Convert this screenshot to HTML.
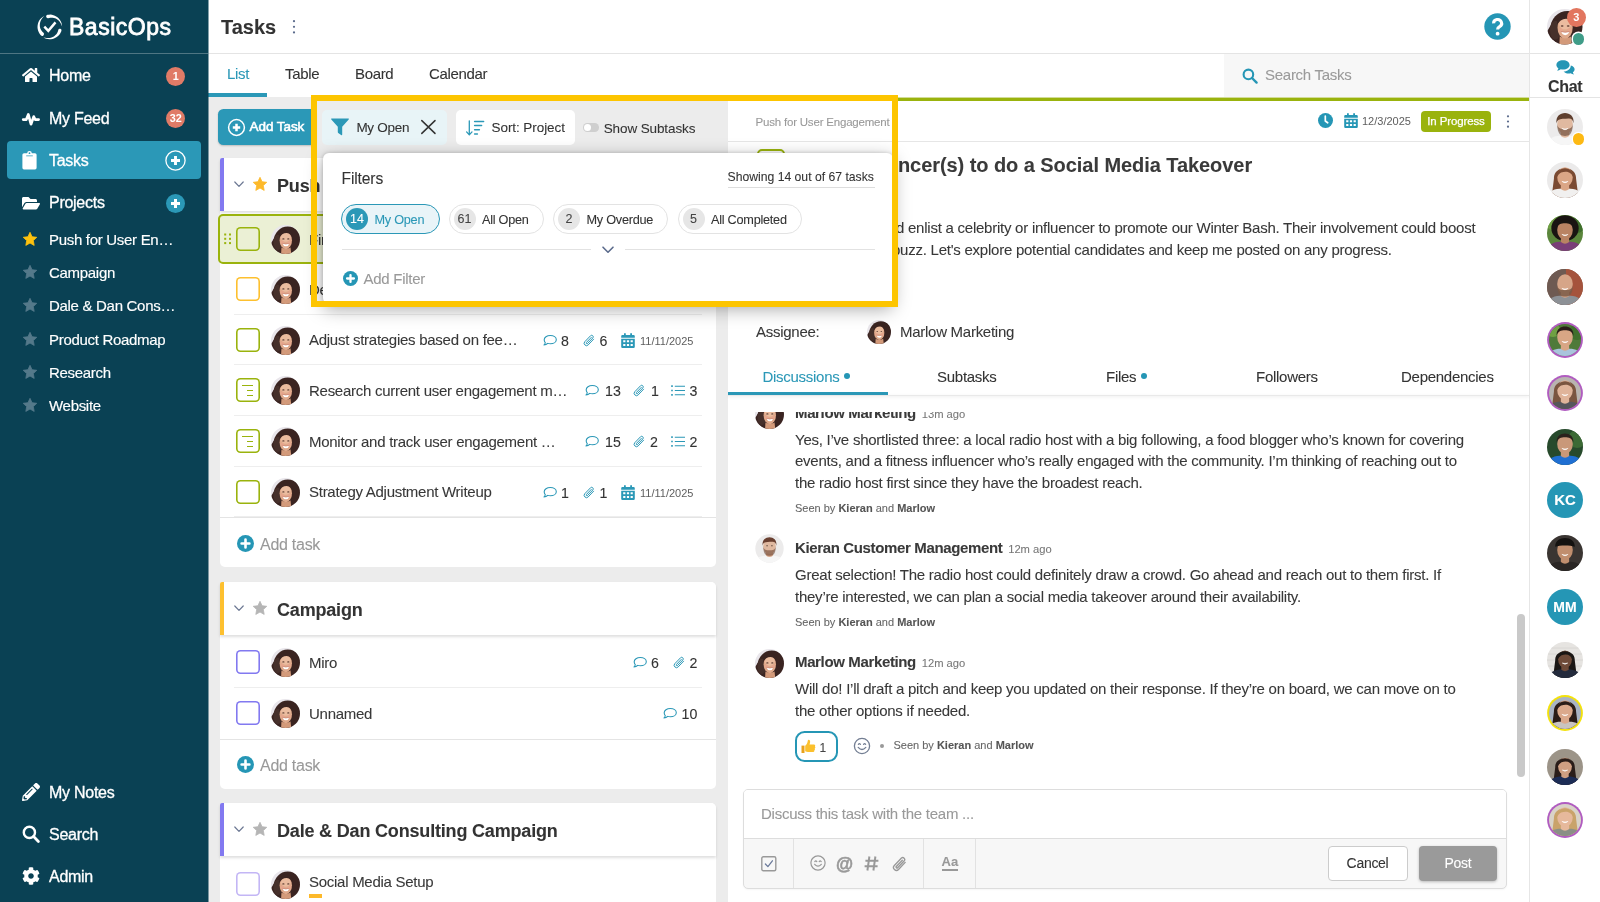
<!DOCTYPE html>
<html lang="en">
<head>
<meta charset="utf-8">
<title>BasicOps – Tasks</title>
<style>
*{box-sizing:border-box;margin:0;padding:0}
html,body{width:1600px;height:902px;overflow:hidden;background:#fff}
body{font-family:"Liberation Sans",Arial,Helvetica,sans-serif;font-size:15px;color:#383838;letter-spacing:-0.018em;position:relative;-webkit-text-stroke:0.080px currentColor}
.abs{position:absolute}
#side,#hdr,#tabs,#list,#det,#chat,#ov,.tab{will-change:transform}
svg{display:block;overflow:visible}
.t{position:absolute;white-space:nowrap;line-height:1}
/* ---------- sidebar ---------- */
#side{position:absolute;left:0;top:0;width:208px;height:902px;background:#0a4154;color:#fff}
#side .logo-line{position:absolute;left:0;top:53px;width:208px;height:1px;background:#4f7683}
.nav{position:absolute;left:49px;margin-top:1px;font-size:16px;line-height:20px;color:#fff;white-space:nowrap;-webkit-text-stroke:0.3px #fff}
.nav.sub{font-size:15px;-webkit-text-stroke:0.15px #fff;margin-top:0;letter-spacing:-0.020em}
.badge{position:absolute;left:166.300px;margin-top:0.800px;width:19px;height:19px;border-radius:50%;background:#e07b67;color:#fff;-webkit-text-stroke:0;font-weight:bold;font-size:10.800px;line-height:19px;text-align:center;letter-spacing:0}
/* ---------- header ---------- */
#hdr{position:absolute;left:208px;top:0;width:1322px;height:54px;background:#fff;border-bottom:1px solid #e4e4e4}
#tabs{position:absolute;left:208px;top:54px;width:1322px;height:43px;background:#fff}
.tab{position:absolute;top:65px;font-size:15px;line-height:17px;color:#333;white-space:nowrap;letter-spacing:-0.022em}
/* ---------- list ---------- */
#list{position:absolute;left:208px;top:97px;width:520px;height:805px;background:#ececec;overflow:hidden}
.card{position:absolute;left:12px;width:496px;background:#fff;border-radius:5px}
.ghead{position:absolute;left:0;top:0;width:496px;height:53px;border-radius:2px 5px 0 0;box-shadow:0 2px 3px rgba(0,0,0,.13);background:#fff}
.ghead .stripe{position:absolute;left:0;top:0;width:4px;height:53px;border-radius:2px 0 0 0}
.gtitle{position:absolute;left:57px;top:16.500px;font-size:18px;font-weight:bold;line-height:22px;color:#333;white-space:nowrap;letter-spacing:-0.01em}
.row{position:absolute;left:0;width:496px;height:50.5px}
.row .ln{position:absolute;left:14px;right:14px;bottom:0;height:1px;background:#eeeeee}
.cb{position:absolute;left:16px;top:13px;width:24.200px;height:24.200px;border-radius:4.500px;background:#fff}
.av{position:absolute;left:51px;top:11px;width:29px;height:29px}
.rt{position:absolute;left:89px;top:16.500px;font-size:15px;line-height:18px;white-space:nowrap;color:#383838}
.cnt{position:absolute;top:17px;font-size:14.200px;line-height:18px;color:#333;letter-spacing:0;-webkit-text-stroke:0.100px currentColor}
.dt{position:absolute;top:19px;font-size:11px;line-height:14px;color:#5e5e5e;letter-spacing:0;-webkit-text-stroke:0}
.addt{position:absolute;left:40px;margin-top:1.500px;font-size:16px;line-height:20px;color:#999}
/* ---------- detail ---------- */
#det{position:absolute;left:728px;top:97px;width:802px;height:805px;background:#fff;border-right:1px solid #e6e6e6}
.msg{position:absolute;left:67px;font-size:15px;line-height:21.6px;color:#383838;white-space:nowrap;letter-spacing:-0.0162em}
.nm{position:absolute;left:67px;font-size:15px;font-weight:bold;line-height:18px;color:#3a3a3a;white-space:nowrap;letter-spacing:-0.024em}
.nm span{font-weight:normal;font-size:11.2px;color:#777;letter-spacing:0;margin-left:2px}
.seen{position:absolute;left:67px;font-size:11px;line-height:13px;color:#666;white-space:nowrap;letter-spacing:0}
.seen b{color:#555}
/* ---------- chat col ---------- */
#chat{position:absolute;left:1530px;top:0;width:70px;height:902px;background:#fff}
.cav{position:absolute;left:17px;width:36px;height:36px;border-radius:50%;overflow:hidden}
</style>
</head>
<body>
<!--DEFS-S-->
<svg width="0" height="0" style="position:absolute">
<defs>
<clipPath id="c30"><circle cx="15" cy="15" r="15"/></clipPath>
<g id="marlow" clip-path="url(#c30)">
  <rect width="30" height="30" fill="#e9e6eb"/>
  <ellipse cx="17.300" cy="17" rx="14.600" ry="15.400" fill="#3a2421"/>
  <path d="M0 19 L3 14 L9 31 L0 31 Z" fill="#3a2421"/>
  <ellipse cx="7" cy="18" rx="4.500" ry="8" fill="#46302b"/>
  <path d="M10.800 23 C12 25 19 25 20.200 23 L21 30.500 H10.400 Z" fill="#d39a7a"/>
  <ellipse cx="15.300" cy="15.800" rx="6.400" ry="9.200" fill="#dfa98b"/>
  <ellipse cx="15.300" cy="12.800" rx="5" ry="4.600" fill="#edc0a4" opacity="0.800"/>
  <ellipse cx="11.700" cy="17.800" rx="1.800" ry="1.500" fill="#e8a58f" opacity="0.700"/>
  <ellipse cx="19" cy="17.800" rx="1.800" ry="1.500" fill="#e8a58f" opacity="0.700"/>
  <path d="M8.400 13.500 C8.600 7 12 4.600 16 4.700 C20.600 4.800 22.800 8.500 22.400 14 C21.400 10.800 19.500 8.400 16.500 8.200 C13 8 10.200 10 8.400 13.500 Z" fill="#3a2421"/>
  <path d="M12.100 19.300 Q15.400 20.300 18.700 19.300 Q17.900 22.100 15.400 22.100 Q12.900 22.100 12.100 19.300 Z" fill="#fff"/>
  <path d="M11.800 19 Q15.400 20.200 19 19" fill="none" stroke="#c4736a" stroke-width="0.500"/>
  <ellipse cx="12.800" cy="14.400" rx="1.200" ry="0.600" fill="#5a3a30"/>
  <ellipse cx="17.900" cy="14.400" rx="1.200" ry="0.600" fill="#5a3a30"/>
</g>
<clipPath id="c36"><circle cx="18" cy="18" r="17.600"/></clipPath>
<g id="kieran" clip-path="url(#c36)"><rect width="36" height="36" fill="#ecebeb"/><g transform="translate(18 17.700) scale(1.300) translate(-18 -18)"><path d="M2 37 C3 26 10 24.800 18 24.800 C26 24.800 33 26 34 37 Z" fill="#f6f6f6"/><path d="M14.800 20 h6.400 v5.200 q-3.200 2.500 -6.400 0 z" fill="#d8a98c"/><ellipse cx="18" cy="16" rx="6" ry="7.600" fill="#e0b9a0"/><path d="M12 16 C12 24 15 25.200 18 25.200 C21 25.200 24 24 24 16 C23.500 19.500 21 20 18 20 C15 20 12.500 19.500 12 16 Z" fill="#6a4532" opacity="0.600"/><path d="M11.500 15.500 C9.800 4.800 26.200 4.800 24.500 15.500 C24.200 12.800 23 11.600 20.800 11.700 C17.500 11.900 14.500 11.800 12.800 12.800 C12 13.500 11.700 14.400 11.500 15.500 Z" fill="#6a4030"/><ellipse cx="15.700" cy="15.600" rx="0.900" ry="0.500" fill="#5a4538"/><ellipse cx="20.300" cy="15.600" rx="0.900" ry="0.500" fill="#5a4538"/></g></g>
</defs></svg>
<!--DEFS-E-->
<!--SIDEBAR-S-->
<div id="side">
  <!-- logo -->
  <svg class="abs" style="left:36px;top:13px" width="28" height="28" viewBox="0 0 28 28"><path d="M11.45 1.83 L12.96 1.63 L14.47 1.62 L15.98 1.79 L17.45 2.16 L18.87 2.69 L20.21 3.40 L21.46 4.27 L22.58 5.29 L23.58 6.44 L24.42 7.70 L25.10 9.05 L25.62 10.48 L25.95 11.96 L26.09 13.47 L26.09 13.47 L25.53 12.03 L24.91 10.69 L24.17 9.45 L23.31 8.34 L22.36 7.37 L21.31 6.53 L20.21 5.85 L19.05 5.31 L17.86 4.93 L16.66 4.71 L15.47 4.64 L14.30 4.71 L13.18 4.92 L12.12 5.26 A1.75 1.75 0 0 1 11.45 1.83 Z" fill="#fff"/><path d="M25.43 17.90 L24.83 19.35 L24.05 20.70 L23.10 21.95 L22.01 23.06 L20.78 24.03 L19.44 24.83 L18.01 25.46 L16.51 25.90 L14.96 26.14 L13.40 26.19 L11.85 26.04 L10.32 25.70 L8.85 25.16 L7.47 24.44 L7.47 24.44 L9.01 24.80 L10.52 25.03 L12.00 25.09 L13.44 24.98 L14.83 24.70 L16.14 24.26 L17.36 23.68 L18.47 22.96 L19.46 22.12 L20.33 21.18 L21.05 20.17 L21.62 19.09 L22.04 17.97 L22.31 16.83 A1.65 1.65 0 0 1 25.43 17.90 Z" fill="#fff"/><path d="M4.80 22.29 L3.77 21.02 L2.91 19.62 L2.25 18.12 L1.79 16.55 L1.54 14.93 L1.52 13.29 L1.71 11.66 L2.11 10.07 L2.72 8.55 L3.53 7.12 L4.53 5.82 L5.68 4.66 L6.99 3.66 L8.41 2.84 L8.41 2.84 L7.23 4.03 L6.20 5.24 L5.34 6.53 L4.67 7.87 L4.19 9.26 L3.90 10.65 L3.80 12.05 L3.88 13.40 L4.13 14.71 L4.55 15.94 L5.11 17.07 L5.81 18.10 L6.61 19.00 L7.51 19.77 A1.85 1.85 0 0 1 4.80 22.29 Z" fill="#fff"/><path d="M8.300 13.600 L12.300 17.900 L19.500 9.400" fill="none" stroke="#fff" stroke-width="2.400" stroke-linecap="butt" stroke-linejoin="miter"/></svg>
  <div class="t" style="left:69px;top:15px;font-size:23px;line-height:25px;color:#fff;letter-spacing:0.022em;-webkit-text-stroke:0.8px #fff">BasicOps</div>
  <div class="logo-line"></div>

  <!-- Home -->
  <svg class="abs" style="left:22px;top:66.500px" width="18" height="16" viewBox="0 0 576 512"><path fill="#fff" d="M280.4 148.3 96 300.1V464a16 16 0 0 0 16 16l112.1-.3a16 16 0 0 0 15.900-16V368a16 16 0 0 1 16-16h64a16 16 0 0 1 16 16v95.600a16 16 0 0 0 16 16.100L464 480a16 16 0 0 0 16-16V300L295.700 148.300a12.200 12.200 0 0 0-15.300 0zM571.600 251.500 488 182.600V44.100a12 12 0 0 0-12-12h-56a12 12 0 0 0-12 12v72.600L318.500 43a48 48 0 0 0-61 0L4.300 251.500a12 12 0 0 0-1.600 16.900l25.500 31a12 12 0 0 0 16.900 1.600l235.200-193.700a12.200 12.200 0 0 1 15.300 0L530.900 301a12 12 0 0 0 16.900-1.600l25.500-31a12 12 0 0 0-1.700-16.900z"/></svg>
  <div class="nav" style="top:65px">Home</div>
  <div class="badge" style="top:66px">1</div>

  <!-- My Feed -->
  <svg class="abs" style="left:22px;top:109.500px" width="18" height="18" viewBox="0 0 18 18"><path d="M1.200 9.600 H4.300 L6.300 4.400 L9 14.200 L11.700 6.600 L13.200 9.600 H16.600" fill="none" stroke="#fff" stroke-width="2.700" stroke-linecap="round" stroke-linejoin="round"/></svg>
  <div class="nav" style="top:108px">My Feed</div>
  <div class="badge" style="top:108px">32</div>

  <!-- Tasks (active) -->
  <div class="abs" style="left:7px;top:141px;width:194px;height:38px;border-radius:4px;background:#2b98b7"></div>
  <svg class="abs" style="left:22px;top:151px" width="15" height="19" viewBox="0 0 15 19"><path fill="#fff" d="M5.200 2.200 A2.300 2.300 0 0 1 9.800 2.200 H13 A1.600 1.600 0 0 1 14.600 3.800 V16.800 A1.600 1.600 0 0 1 13 18.400 H2 A1.600 1.600 0 0 1 0.400 16.800 V3.800 A1.600 1.600 0 0 1 2 2.200 Z M7.500 1.300 A0.900 0.900 0 1 0 7.500 3.100 A0.900 0.900 0 1 0 7.500 1.300 Z M4.200 4.400 V5.200 H10.800 V4.400 Z"/></svg>
  <div class="nav" style="top:150px">Tasks</div>
  <svg class="abs" style="left:165px;top:150.400px" width="21" height="21" viewBox="0 0 21 21"><circle cx="10.500" cy="10.500" r="9.600" fill="none" stroke="#fff" stroke-width="1.300"/><path d="M10.500 6 V15 M6 10.500 H15" stroke="#fff" stroke-width="2.900" stroke-linecap="butt"/></svg>

  <!-- Projects -->
  <svg class="abs" style="left:22px;top:195.500px" width="18" height="14" viewBox="0 0 576 448"><path fill="#fff" d="M572.700 260.600 488.300 405.300A48 48 0 0 1 446.800 429H45.600c-18.500 0-30.100-20.100-20.700-36.100l84.400-144.700A48 48 0 0 1 150.800 224.400h401.200c18.500 0 30.100 20.100 20.700 36.200zM150.800 192.400H480v-48c0-26.500-21.500-48-48-48H272l-64-64H48C21.500 32.400 0 53.900 0 80.400v278l69.100-118.400c17.100-29.400 48.900-47.600 81.700-47.600z"/></svg>
  <div class="nav" style="top:192px">Projects</div>
  <svg class="abs" style="left:166px;top:193.700px" width="19" height="19" viewBox="0 0 19 19"><circle cx="9.500" cy="9.500" r="9.500" fill="#2b98b7"/><path d="M9.500 5 V14 M5 9.500 H14" stroke="#fff" stroke-width="3" stroke-linecap="butt"/></svg>

  <!-- project list -->
  <svg width="0" height="0" style="position:absolute"><defs><path id="star" d="M7 0.300 L9.050 4.700 L13.800 5.300 L10.300 8.600 L11.200 13.400 L7 11.050 L2.800 13.400 L3.700 8.600 L0.200 5.300 L4.950 4.700 Z" stroke-linejoin="round"/></defs></svg>
  <svg class="abs" style="left:23.300px;top:232.4px" width="14" height="14"><use href="#star" fill="#fec20e" stroke="#fec20e" stroke-width="0.800"/></svg>
  <div class="nav sub" style="top:230px">Push for User En…</div>
  <svg class="abs" style="left:23.300px;top:265.4px" width="14" height="14"><use href="#star" fill="#54798a" stroke="#54798a" stroke-width="0.800"/></svg>
  <div class="nav sub" style="top:263px">Campaign</div>
  <svg class="abs" style="left:23.300px;top:298.4px" width="14" height="14"><use href="#star" fill="#54798a" stroke="#54798a" stroke-width="0.800"/></svg>
  <div class="nav sub" style="top:296px">Dale &amp; Dan Cons…</div>
  <svg class="abs" style="left:23.300px;top:332.4px" width="14" height="14"><use href="#star" fill="#54798a" stroke="#54798a" stroke-width="0.800"/></svg>
  <div class="nav sub" style="top:330px">Product Roadmap</div>
  <svg class="abs" style="left:23.300px;top:365.4px" width="14" height="14"><use href="#star" fill="#54798a" stroke="#54798a" stroke-width="0.800"/></svg>
  <div class="nav sub" style="top:363px">Research</div>
  <svg class="abs" style="left:23.300px;top:398.4px" width="14" height="14"><use href="#star" fill="#54798a" stroke="#54798a" stroke-width="0.800"/></svg>
  <div class="nav sub" style="top:396px">Website</div>

  <!-- bottom -->
  <svg class="abs" style="left:22px;top:783px" width="18" height="18" viewBox="0 0 512 512"><path fill="#fff" d="M497.900 142.100l-46.100 46.100c-4.700 4.700-12.300 4.700-17 0l-111-111c-4.700-4.700-4.700-12.300 0-17l46.100-46.100c18.700-18.700 49.100-18.700 67.900 0l60.100 60.100c18.800 18.700 18.800 49.100 0 67.900zM284.200 99.800L21.600 362.400.4 483.900c-2.900 16.400 11.400 30.600 27.800 27.800l121.500-21.300 262.600-262.600c4.700-4.700 4.700-12.300 0-17l-111-111c-4.800-4.700-12.400-4.700-17.100 0zM124.100 339.900c-5.500-5.500-5.500-14.300 0-19.800l154-154c5.500-5.500 14.300-5.500 19.800 0s5.500 14.300 0 19.800l-154 154c-5.500 5.500-14.300 5.500-19.800 0zM88 424h48v36.300l-64.500 11.300-31.100-31.100L51.700 376H88v48z"/></svg>
  <div class="nav" style="top:782px">My Notes</div>
  <svg class="abs" style="left:22px;top:825px" width="18" height="18" viewBox="0 0 18 18"><circle cx="7.400" cy="7.400" r="5.600" fill="none" stroke="#fff" stroke-width="2.400"/><path d="M11.600 11.600 L16.400 16.400" stroke="#fff" stroke-width="2.800" stroke-linecap="round"/></svg>
  <div class="nav" style="top:824px">Search</div>
  <svg class="abs" style="left:22px;top:867px" width="18" height="18" viewBox="0 0 512 512"><path fill="#fff" d="M487.400 315.700l-42.600-24.600c4.300-23.200 4.300-47 0-70.200l42.600-24.600c4.900-2.800 7.100-8.600 5.500-14-11.100-35.600-30-67.800-54.700-94.600-3.800-4.100-10-5.100-14.800-2.300L380.800 110c-17.900-15.400-38.500-27.300-60.800-35.100V25.800c0-5.600-3.900-10.500-9.400-11.700-36.700-8.200-74.300-7.800-109.200 0-5.500 1.200-9.400 6.100-9.400 11.700V75c-22.200 7.900-42.800 19.800-60.800 35.100L88.700 85.500c-4.900-2.800-11-1.900-14.800 2.300-24.700 26.700-43.600 58.900-54.700 94.600-1.700 5.400.6 11.200 5.500 14L67.300 221c-4.300 23.200-4.300 47 0 70.200l-42.600 24.600c-4.900 2.800-7.100 8.600-5.500 14 11.100 35.600 30 67.800 54.700 94.600 3.800 4.100 10 5.100 14.800 2.300l42.600-24.600c17.900 15.400 38.500 27.300 60.800 35.100v49.200c0 5.600 3.900 10.500 9.400 11.700 36.700 8.200 74.300 7.800 109.200 0 5.500-1.200 9.400-6.100 9.400-11.700v-49.200c22.200-7.900 42.800-19.800 60.800-35.100l42.600 24.600c4.900 2.800 11 1.900 14.800-2.300 24.700-26.700 43.600-58.900 54.700-94.600 1.500-5.500-.7-11.300-5.600-14.100zM256 336c-44.100 0-80-35.900-80-80s35.900-80 80-80 80 35.900 80 80-35.900 80-80 80z"/></svg>
  <div class="nav" style="top:866px">Admin</div>
</div>
<!--SIDEBAR-E-->
<!--HEADER-S-->
<div id="hdr">
  <div class="t" style="left:13px;top:16px;font-size:20px;line-height:22px;font-weight:bold;color:#333;letter-spacing:0">Tasks</div>
  <svg class="abs" style="left:84px;top:19px" width="4" height="16" viewBox="0 0 4 16"><circle cx="2" cy="2.200" r="1.100" fill="#5b6b8c"/><circle cx="2" cy="7.800" r="1.100" fill="#5b6b8c"/><circle cx="2" cy="13.400" r="1.100" fill="#5b6b8c"/></svg>
  <svg class="abs" style="left:1276px;top:13px" width="27" height="27" viewBox="0 0 27 27"><circle cx="13.500" cy="13.500" r="13.200" fill="#2596b5"/><path d="M9.600 10.400 A4 3.800 0 1 1 15.600 13.600 Q13.600 14.700 13.600 16.600" fill="none" stroke="#fff" stroke-width="3.100" stroke-linecap="butt"/><circle cx="13.600" cy="20.700" r="1.900" fill="#fff"/></svg>
</div>
<div id="tabs">
  <div class="abs" style="left:0;top:39px;width:58.500px;height:4px;background:#2b98b7"></div>
  <div class="abs" style="left:1016px;top:0;width:306px;height:43px;background:#f7f7f7"></div>
  <svg class="abs" style="left:1034px;top:14px" width="16" height="16" viewBox="0 0 16 16"><circle cx="6.400" cy="6.400" r="4.800" fill="none" stroke="#2596b5" stroke-width="2.100"/><path d="M10 10 L14.600 14.600" stroke="#2596b5" stroke-width="2.400" stroke-linecap="round"/></svg>
  <div class="t" style="left:1057px;top:12px;font-size:15px;line-height:18px;color:#9a9a9a">Search Tasks</div>
</div>
<div class="tab" style="left:226.500px;color:#2b98b7">List</div>
<div class="tab" style="left:285px">Table</div>
<div class="tab" style="left:355px">Board</div>
<div class="tab" style="left:429px">Calendar</div>
<!--HEADER-E-->
<!--LIST-S-->
<div id="list"><div class="abs" style="left:10px;top:12px;width:98px;height:35.800px;border-radius:5.500px;background:#2b98b7;box-shadow:0 1px 2px rgba(0,0,0,.2)"></div><svg class="abs" style="left:20px;top:21.500px" width="17" height="17" viewBox="0 0 17 17"><circle cx="8.500" cy="8.500" r="7.900" fill="none" stroke="#fff" stroke-width="1.500"/><path d="M8.500 4.800 V12.200 M4.800 8.500 H12.200" stroke="#fff" stroke-width="2.500" stroke-linecap="butt"/></svg><div class="t" style="left:41.500px;top:21px;font-size:13.500px;line-height:18px;color:#fff;-webkit-text-stroke:0.550px #fff;letter-spacing:-0.005em">Add Task</div><div class="card" style="top:61px;height:409px"><div class="ghead"><div class="stripe" style="background:#8279f0"></div><svg class="abs" style="left:14px;top:23px" width="10" height="7" viewBox="0 0 10 7"><path d="M0.800 1 L5 5.400 L9.200 1" fill="none" stroke="#6c7893" stroke-width="1.200" stroke-linecap="round" stroke-linejoin="round"/></svg><svg class="abs" style="left:33px;top:19px" width="14" height="14"><use href="#star" fill="#fdb92a" stroke="#fdb92a" stroke-width="0.800"/></svg><div class="gtitle">Push for User Engagement</div></div><div class="abs" style="left:-2px;top:56px;width:500px;height:50px;border:2px solid #9ab30d;border-radius:5px;background:#ebf0d5"></div><svg class="abs" style="left:4px;top:75px" width="8" height="12" viewBox="0 0 8 12"><g fill="#9ab30d"><rect x="0.200" y="0.500" width="2" height="2"/><rect x="5" y="0.500" width="2" height="2"/><rect x="0.200" y="4.800" width="2" height="2"/><rect x="5" y="4.800" width="2" height="2"/><rect x="0.200" y="9.100" width="2" height="2"/><rect x="5" y="9.100" width="2" height="2"/></g></svg><div class="row" style="top:56px"><div class="cb" style="box-shadow:inset 0 0 0 1.600px #9ab30d;background:#ebf0d5;left:16px;top:13px"></div><svg class="av" viewBox="0 0 30 30"><use href="#marlow"/></svg><div class="rt">Find Influencer(s) to do a Social…</div></div><div class="row" style="top:106px"><div class="cb" style="box-shadow:inset 0 0 0 1.600px #fdc02f;background:#fff;left:16px;top:13px"></div><svg class="av" viewBox="0 0 30 30"><use href="#marlow"/></svg><div class="rt">Decide on the campaign channels</div><div class="ln"></div></div><div class="row" style="top:156.5px"><div class="cb" style="box-shadow:inset 0 0 0 1.600px #9ab30d;background:#fff;left:16px;top:13px"></div><svg class="av" viewBox="0 0 30 30"><use href="#marlow"/></svg><div class="rt">Adjust strategies based on fee…</div><svg class="abs" style="left:323px;top:19px" width="14" height="11.200" viewBox="0 0 14 12" preserveAspectRatio="none" transform="translate(0 0.800)"><path d="M7.300 0.800 C10.700 0.800 13.300 2.700 13.300 5.200 C13.300 7.700 10.700 9.600 7.300 9.600 C6.400 9.600 5.500 9.450 4.700 9.200 C3.800 10.200 2.400 10.900 0.900 11 C1.700 10.200 2.200 9.300 2.300 8.300 C1.600 7.500 1.200 6.400 1.200 5.200 C1.200 2.700 3.900 0.800 7.300 0.800 Z" fill="none" stroke="#2b98b7" stroke-width="1.100" stroke-linejoin="round"/></svg><div class="cnt" style="left:341px;top:17px">8</div><svg class="abs" style="left:363px;top:19px" width="12" height="13" viewBox="0 0 12 13"><path d="M10.600 5.200 L5.200 10.900 A2.300 2.300 0 0 1 1.800 7.700 L7.600 1.700 A1.600 1.600 0 0 1 9.900 3.900 L4.500 9.500 A0.700 0.700 0 0 1 3.400 8.500 L8.300 3.400" fill="none" stroke="#2b98b7" stroke-width="1" stroke-linecap="round" stroke-linejoin="round"/></svg><div class="cnt" style="left:379.5px;top:17px">6</div><svg class="abs" style="left:400.800px;top:18px" width="14" height="15" viewBox="0 0 14 15"><path fill="#2b98b7" d="M3 0.300 h1.800 v1.700 h4.400 v-1.700 h1.800 v1.700 h1.600 a1.200 1.200 0 0 1 1.200 1.200 v1.600 h-13.600 v-1.600 a1.200 1.200 0 0 1 1.200 -1.200 h1.600 z M0.200 5.700 h13.600 v8 a1.200 1.200 0 0 1 -1.200 1.200 h-11.200 a1.200 1.200 0 0 1 -1.200 -1.200 z M2.200 7.300 v2 h2.200 v-2 z M5.900 7.300 v2 h2.200 v-2 z M9.600 7.300 v2 h2.200 v-2 z M2.200 10.900 v2 h2.200 v-2 z M5.900 10.900 v2 h2.200 v-2 z M9.600 10.900 v2 h2.200 v-2 z"/></svg><div class="dt" style="left:420px;top:19px">11/11/2025</div><div class="ln"></div></div><div class="row" style="top:207px;height:51px"><div class="cb" style="box-shadow:inset 0 0 0 1.600px #9ab30d;background:#fff;left:16px;top:13px"><i style="position:absolute;left:6.400px;top:6.700px;width:11px;height:1.300px;background:#9ab30d"></i><i style="position:absolute;left:10.500px;top:11.700px;width:6.900px;height:1.300px;background:#9ab30d"></i><i style="position:absolute;left:10.500px;top:16.700px;width:6.900px;height:1.300px;background:#9ab30d"></i></div><svg class="av" viewBox="0 0 30 30"><use href="#marlow"/></svg><div class="rt">Research current user engagement m…</div><svg class="abs" style="left:365px;top:19px" width="14" height="11.200" viewBox="0 0 14 12" preserveAspectRatio="none" transform="translate(0 0.800)"><path d="M7.300 0.800 C10.700 0.800 13.300 2.700 13.300 5.200 C13.300 7.700 10.700 9.600 7.300 9.600 C6.400 9.600 5.500 9.450 4.700 9.200 C3.800 10.200 2.400 10.900 0.900 11 C1.700 10.200 2.200 9.300 2.300 8.300 C1.600 7.500 1.200 6.400 1.200 5.200 C1.200 2.700 3.900 0.800 7.300 0.800 Z" fill="none" stroke="#2b98b7" stroke-width="1.100" stroke-linejoin="round"/></svg><div class="cnt" style="left:385px;top:17px">13</div><svg class="abs" style="left:413px;top:19px" width="12" height="13" viewBox="0 0 12 13"><path d="M10.600 5.200 L5.200 10.900 A2.300 2.300 0 0 1 1.800 7.700 L7.600 1.700 A1.600 1.600 0 0 1 9.900 3.900 L4.500 9.500 A0.700 0.700 0 0 1 3.400 8.500 L8.300 3.400" fill="none" stroke="#2b98b7" stroke-width="1" stroke-linecap="round" stroke-linejoin="round"/></svg><div class="cnt" style="left:431px;top:17px">1</div><svg class="abs" style="left:451px;top:20px" width="14" height="11" viewBox="0 0 14 11"><path d="M0.200 1.200 H1.800 M0.200 5.500 H1.800 M0.200 9.800 H1.800" stroke="#2b98b7" stroke-width="1.700"/><path d="M3.800 1.200 H14 M3.800 5.500 H14 M3.800 9.800 H14" stroke="#2b98b7" stroke-width="1.100"/></svg><div class="cnt" style="left:469.5px;top:17px">3</div><div class="ln"></div></div><div class="row" style="top:258px"><div class="cb" style="box-shadow:inset 0 0 0 1.600px #9ab30d;background:#fff;left:16px;top:13px"><i style="position:absolute;left:6.400px;top:6.700px;width:11px;height:1.300px;background:#9ab30d"></i><i style="position:absolute;left:10.500px;top:11.700px;width:6.900px;height:1.300px;background:#9ab30d"></i><i style="position:absolute;left:10.500px;top:16.700px;width:6.900px;height:1.300px;background:#9ab30d"></i></div><svg class="av" viewBox="0 0 30 30"><use href="#marlow"/></svg><div class="rt">Monitor and track user engagement …</div><svg class="abs" style="left:365px;top:19px" width="14" height="11.200" viewBox="0 0 14 12" preserveAspectRatio="none" transform="translate(0 0.800)"><path d="M7.300 0.800 C10.700 0.800 13.300 2.700 13.300 5.200 C13.300 7.700 10.700 9.600 7.300 9.600 C6.400 9.600 5.500 9.450 4.700 9.200 C3.800 10.200 2.400 10.900 0.900 11 C1.700 10.200 2.200 9.300 2.300 8.300 C1.600 7.500 1.200 6.400 1.200 5.200 C1.200 2.700 3.900 0.800 7.300 0.800 Z" fill="none" stroke="#2b98b7" stroke-width="1.100" stroke-linejoin="round"/></svg><div class="cnt" style="left:385px;top:17px">15</div><svg class="abs" style="left:413px;top:19px" width="12" height="13" viewBox="0 0 12 13"><path d="M10.600 5.200 L5.200 10.900 A2.300 2.300 0 0 1 1.800 7.700 L7.600 1.700 A1.600 1.600 0 0 1 9.900 3.900 L4.500 9.500 A0.700 0.700 0 0 1 3.400 8.500 L8.300 3.400" fill="none" stroke="#2b98b7" stroke-width="1" stroke-linecap="round" stroke-linejoin="round"/></svg><div class="cnt" style="left:430px;top:17px">2</div><svg class="abs" style="left:451px;top:20px" width="14" height="11" viewBox="0 0 14 11"><path d="M0.200 1.200 H1.800 M0.200 5.500 H1.800 M0.200 9.800 H1.800" stroke="#2b98b7" stroke-width="1.700"/><path d="M3.800 1.200 H14 M3.800 5.500 H14 M3.800 9.800 H14" stroke="#2b98b7" stroke-width="1.100"/></svg><div class="cnt" style="left:469.5px;top:17px">2</div><div class="ln"></div></div><div class="row" style="top:308.5px"><div class="cb" style="box-shadow:inset 0 0 0 1.600px #9ab30d;background:#fff;left:16px;top:13px"></div><svg class="av" viewBox="0 0 30 30"><use href="#marlow"/></svg><div class="rt">Strategy Adjustment Writeup</div><svg class="abs" style="left:323px;top:19px" width="14" height="11.200" viewBox="0 0 14 12" preserveAspectRatio="none" transform="translate(0 0.800)"><path d="M7.300 0.800 C10.700 0.800 13.300 2.700 13.300 5.200 C13.300 7.700 10.700 9.600 7.300 9.600 C6.400 9.600 5.500 9.450 4.700 9.200 C3.800 10.200 2.400 10.900 0.900 11 C1.700 10.200 2.200 9.300 2.300 8.300 C1.600 7.500 1.200 6.400 1.200 5.200 C1.200 2.700 3.900 0.800 7.300 0.800 Z" fill="none" stroke="#2b98b7" stroke-width="1.100" stroke-linejoin="round"/></svg><div class="cnt" style="left:341px;top:17px">1</div><svg class="abs" style="left:363px;top:19px" width="12" height="13" viewBox="0 0 12 13"><path d="M10.600 5.200 L5.200 10.900 A2.300 2.300 0 0 1 1.800 7.700 L7.600 1.700 A1.600 1.600 0 0 1 9.900 3.900 L4.500 9.500 A0.700 0.700 0 0 1 3.400 8.500 L8.300 3.400" fill="none" stroke="#2b98b7" stroke-width="1" stroke-linecap="round" stroke-linejoin="round"/></svg><div class="cnt" style="left:379.5px;top:17px">1</div><svg class="abs" style="left:400.800px;top:18px" width="14" height="15" viewBox="0 0 14 15"><path fill="#2b98b7" d="M3 0.300 h1.800 v1.700 h4.400 v-1.700 h1.800 v1.700 h1.600 a1.200 1.200 0 0 1 1.200 1.200 v1.600 h-13.600 v-1.600 a1.200 1.200 0 0 1 1.200 -1.200 h1.600 z M0.200 5.700 h13.600 v8 a1.200 1.200 0 0 1 -1.200 1.200 h-11.200 a1.200 1.200 0 0 1 -1.200 -1.200 z M2.200 7.300 v2 h2.200 v-2 z M5.900 7.300 v2 h2.200 v-2 z M9.600 7.300 v2 h2.200 v-2 z M2.200 10.900 v2 h2.200 v-2 z M5.900 10.900 v2 h2.200 v-2 z M9.600 10.900 v2 h2.200 v-2 z"/></svg><div class="dt" style="left:420px;top:19px">11/11/2025</div><div class="ln"></div></div><div class="abs" style="left:0;top:358.500px;width:496px;height:1px;background:#e4e4e4"></div><svg class="abs" style="left:17px;top:377px" width="17" height="17" viewBox="0 0 17 17"><circle cx="8.500" cy="8.500" r="8.500" fill="#2596b5"/><path d="M8.500 4.600 V12.400 M4.600 8.500 H12.400" stroke="#fff" stroke-width="2.600" stroke-linecap="round"/></svg><div class="addt" style="top:375px">Add task</div></div><div class="card" style="top:485px;height:207px"><div class="ghead"><div class="stripe" style="background:#fdc02f"></div><svg class="abs" style="left:14px;top:23px" width="10" height="7" viewBox="0 0 10 7"><path d="M0.800 1 L5 5.400 L9.200 1" fill="none" stroke="#6c7893" stroke-width="1.200" stroke-linecap="round" stroke-linejoin="round"/></svg><svg class="abs" style="left:33px;top:19px" width="14" height="14"><use href="#star" fill="#b5b5b5" stroke="#b5b5b5" stroke-width="0.800"/></svg><div class="gtitle">Campaign</div></div><div class="row" style="top:55px"><div class="cb" style="box-shadow:inset 0 0 0 1.600px #8279f0;background:#fff;left:16px;top:13px"></div><svg class="av" viewBox="0 0 30 30"><use href="#marlow"/></svg><div class="rt">Miro</div><svg class="abs" style="left:413px;top:19px" width="14" height="11.200" viewBox="0 0 14 12" preserveAspectRatio="none" transform="translate(0 0.800)"><path d="M7.300 0.800 C10.700 0.800 13.300 2.700 13.300 5.200 C13.300 7.700 10.700 9.600 7.300 9.600 C6.400 9.600 5.500 9.450 4.700 9.200 C3.800 10.200 2.400 10.900 0.900 11 C1.700 10.200 2.200 9.300 2.300 8.300 C1.600 7.500 1.200 6.400 1.200 5.200 C1.200 2.700 3.900 0.800 7.300 0.800 Z" fill="none" stroke="#2b98b7" stroke-width="1.100" stroke-linejoin="round"/></svg><div class="cnt" style="left:431px;top:17px">6</div><svg class="abs" style="left:453px;top:19px" width="12" height="13" viewBox="0 0 12 13"><path d="M10.600 5.200 L5.200 10.900 A2.300 2.300 0 0 1 1.800 7.700 L7.600 1.700 A1.600 1.600 0 0 1 9.900 3.900 L4.500 9.500 A0.700 0.700 0 0 1 3.400 8.500 L8.300 3.400" fill="none" stroke="#2b98b7" stroke-width="1" stroke-linecap="round" stroke-linejoin="round"/></svg><div class="cnt" style="left:469.5px;top:17px">2</div><div class="ln"></div></div><div class="row" style="top:106px"><div class="cb" style="box-shadow:inset 0 0 0 1.600px #8279f0;background:#fff;left:16px;top:13px"></div><svg class="av" viewBox="0 0 30 30"><use href="#marlow"/></svg><div class="rt">Unnamed</div><svg class="abs" style="left:443px;top:19px" width="14" height="11.200" viewBox="0 0 14 12" preserveAspectRatio="none" transform="translate(0 0.800)"><path d="M7.300 0.800 C10.700 0.800 13.300 2.700 13.300 5.200 C13.300 7.700 10.700 9.600 7.300 9.600 C6.400 9.600 5.500 9.450 4.700 9.200 C3.800 10.200 2.400 10.900 0.900 11 C1.700 10.200 2.200 9.300 2.300 8.300 C1.600 7.500 1.200 6.400 1.200 5.200 C1.200 2.700 3.900 0.800 7.300 0.800 Z" fill="none" stroke="#2b98b7" stroke-width="1.100" stroke-linejoin="round"/></svg><div class="cnt" style="left:461.5px;top:17px">10</div></div><div class="abs" style="left:0;top:156.500px;width:496px;height:1px;background:#e4e4e4"></div><svg class="abs" style="left:17px;top:174px" width="17" height="17" viewBox="0 0 17 17"><circle cx="8.500" cy="8.500" r="8.500" fill="#2596b5"/><path d="M8.500 4.600 V12.400 M4.600 8.500 H12.400" stroke="#fff" stroke-width="2.600" stroke-linecap="round"/></svg><div class="addt" style="top:172px">Add task</div></div><div class="card" style="top:706px;height:140px"><div class="ghead"><div class="stripe" style="background:#8279f0"></div><svg class="abs" style="left:14px;top:23px" width="10" height="7" viewBox="0 0 10 7"><path d="M0.800 1 L5 5.400 L9.200 1" fill="none" stroke="#6c7893" stroke-width="1.200" stroke-linecap="round" stroke-linejoin="round"/></svg><svg class="abs" style="left:33px;top:19px" width="14" height="14"><use href="#star" fill="#b5b5b5" stroke="#b5b5b5" stroke-width="0.800"/></svg><div class="gtitle">Dale &amp; Dan Consulting Campaign</div></div><div class="row" style="top:56px"><div class="cb" style="box-shadow:inset 0 0 0 1.600px #c3b6f5;background:#fff;left:16px;top:13px"></div><svg class="av" viewBox="0 0 30 30"><use href="#marlow"/></svg><div class="rt" style="top:14px">Social Media Setup</div><div class="abs" style="left:89px;top:35px;width:13px;height:4px;background:#fdb92a"></div></div></div></div>
<!--LIST-E-->
<!--DETAIL-S-->
<div id="det"><div class="abs" style="left:0;top:0;width:801px;height:1px;background:#d2dc99"></div><div class="abs" style="left:0;top:1px;width:801px;height:3px;background:#9ab30d"></div><div class="t" style="left:27.5px;top:18px;font-size:11.500px;line-height:14px;color:#999;letter-spacing:-0.017em">Push for User Engagement</div><svg class="abs" style="left:589.5px;top:16.3px" width="15" height="15" viewBox="0 0 15 15"><circle cx="7.500" cy="7.500" r="7.500" fill="#2596b5"/><path d="M7.300 3.200 V8 L9.700 9.800" fill="none" stroke="#fff" stroke-width="1.700" stroke-linecap="round" stroke-linejoin="round"/></svg><svg class="abs" style="left:616px;top:16.3px" width="14" height="15" viewBox="0 0 14 15"><path fill="#2596b5" d="M3 0.300 h1.800 v1.700 h4.400 v-1.700 h1.800 v1.700 h1.600 a1.200 1.200 0 0 1 1.200 1.200 v1.600 h-13.600 v-1.600 a1.200 1.200 0 0 1 1.200 -1.200 h1.600 z M0.200 5.700 h13.600 v8 a1.200 1.200 0 0 1 -1.200 1.200 h-11.200 a1.200 1.200 0 0 1 -1.200 -1.200 z M2.200 7.300 v2 h2.200 v-2 z M5.900 7.300 v2 h2.200 v-2 z M9.600 7.300 v2 h2.200 v-2 z M2.200 10.900 v2 h2.200 v-2 z M5.900 10.900 v2 h2.200 v-2 z M9.600 10.900 v2 h2.200 v-2 z"/></svg><div class="t" style="left:634px;top:17px;font-size:11px;line-height:14px;color:#5e5e5e;letter-spacing:0;-webkit-text-stroke:0">12/3/2025</div><div class="abs" style="left:693px;top:13.5px;width:70px;height:21px;border-radius:4px;background:#9ab30d;color:#fff;font-size:11.500px;line-height:21px;text-align:center;letter-spacing:-0.010em;-webkit-text-stroke:0.250px #fff">In Progress</div><svg class="abs" style="left:777.5px;top:17px" width="4" height="16" viewBox="0 0 4 16"><circle cx="2" cy="2.300" r="1.100" fill="#5b6b8c"/><circle cx="2" cy="7.500" r="1.100" fill="#5b6b8c"/><circle cx="2" cy="12.700" r="1.100" fill="#5b6b8c"/></svg><div class="abs" style="left:0;top:44px;width:801px;height:1px;background:#e6e6e6"></div><div class="abs" style="left:29px;top:52px;width:28px;height:28px;border-radius:5px;border:2px solid #9ab30d;background:#fff"></div><div class="t" style="left:69.5px;top:56.400px;font-size:20px;line-height:24px;font-weight:bold;color:#3a3a3a;letter-spacing:-0.003em">Find Influencer(s) to do a Social Media Takeover</div><div class="msg" style="left:28px;top:120px"><span style="display:inline-block;width:140px;overflow:hidden;vertical-align:top">I think that we shoul</span>d enlist a celebrity or influencer to promote our Winter Bash. Their involvement could boost<br><span style="display:inline-block;width:136px;overflow:hidden;vertical-align:top">turnout and generate&nbsp;</span>buzz. Let's explore potential candidates and keep me posted on any progress.</div><div class="t" style="left:28px;top:225.5px;font-size:15px;line-height:18px">Assignee:</div><svg class="abs" style="left:139px;top:222.5px" width="24" height="24" viewBox="0 0 30 30"><use href="#marlow"/></svg><div class="t" style="left:172px;top:225.5px;font-size:15px;line-height:18px">Marlow Marketing</div><div class="t" style="left:34.4px;top:270.5px;font-size:15px;line-height:18px;color:#2b98b7">Discussions<i style="display:inline-block;width:6px;height:6px;border-radius:50%;background:#2596b5;margin-left:5px;vertical-align:2.500px"></i></div><div class="t" style="left:209px;top:270.5px;font-size:15px;line-height:18px;color:#333">Subtasks</div><div class="t" style="left:378px;top:270.5px;font-size:15px;line-height:18px;color:#333">Files<i style="display:inline-block;width:6px;height:6px;border-radius:50%;background:#2596b5;margin-left:5px;vertical-align:2.500px"></i></div><div class="t" style="left:528px;top:270.5px;font-size:15px;line-height:18px;color:#333">Followers</div><div class="t" style="left:673px;top:270.5px;font-size:15px;line-height:18px;color:#333">Dependencies</div><div class="abs" style="left:0;top:297.5px;width:801px;height:1px;background:#e9e9e9;box-shadow:0 1px 3px rgba(0,0,0,.12)"></div><div class="abs" style="left:0;top:294.5px;width:160px;height:3.500px;background:#2b98b7"></div><div class="abs" style="left:0;top:313.5px;width:785px;height:374.5px;overflow:hidden"><svg class="abs" style="left:26.5px;top:-11.0px" width="29" height="29" viewBox="0 0 30 30"><use href="#marlow"/></svg><div class="nm" style="top:-7.0px">Marlow Marketing <span>13m ago</span></div><div class="msg" style="top:18.3px">Yes, I’ve shortlisted three: a local radio host with a big following, a food blogger who’s known for covering<br>events, and a fitness influencer who’s really engaged with the community. I’m thinking of reaching out to<br>the radio host first since they have the broadest reach.</div><div class="seen" style="top:91.5px">Seen by <b>Kieran</b> and <b>Marlow</b></div><svg class="abs" style="left:26.5px;top:123.5px" width="29" height="29" viewBox="0 0 36 36"><use href="#kieran"/></svg><div class="nm" style="top:128.5px">Kieran Customer Management <span>12m ago</span></div><div class="msg" style="top:153.8px">Great selection! The radio host could definitely draw a crowd. Go ahead and reach out to them first. If<br>they’re interested, we can plan a social media takeover around their availability.</div><div class="seen" style="top:205.5px">Seen by <b>Kieran</b> and <b>Marlow</b></div><svg class="abs" style="left:26.5px;top:238.0px" width="29" height="29" viewBox="0 0 30 30"><use href="#marlow"/></svg><div class="nm" style="top:242.5px">Marlow Marketing <span>12m ago</span></div><div class="msg" style="top:267.8px">Will do! I’ll draft a pitch and keep you updated on their response. If they’re on board, we can move on to<br>the other options if needed.</div><div class="abs" style="left:67px;top:320.3px;width:42.500px;height:31.500px;border:2px solid #2596b5;border-radius:9.500px;background:#fff"></div><svg class="abs" style="left:73px;top:328.5px" width="15" height="15" viewBox="0 0 15 15"><path d="M0.500 6.600 h3 v7.400 h-3 z" fill="#e8a21c"/><path d="M4.200 6.800 C5.800 5.600 6.600 3.600 6.800 1.400 C6.900 0.600 8.600 0.500 9 1.800 C9.300 3 9 4.400 8.500 5.600 h4.500 c1.200 0 1.600 1.400 0.900 2 c0.700 0.500 0.600 1.600 -0.200 1.900 c0.500 0.600 0.300 1.500 -0.400 1.800 c0.400 0.700 0 1.700 -1 1.700 h-5.300 c-1 0 -1.900 -0.300 -2.800 -0.800 z" fill="#fbc02d"/></svg><div class="t" style="left:91.5px;top:330.0px;font-size:12px;line-height:14px;color:#444;letter-spacing:0">1</div><svg class="abs" style="left:125px;top:326.5px" width="18" height="18" viewBox="0 0 18 18"><circle cx="9" cy="9" r="7.600" fill="none" stroke="#737e93" stroke-width="1.300"/><path d="M5.200 10.400 Q9 14.600 12.800 10.400" fill="none" stroke="#737e93" stroke-width="1.300" stroke-linecap="round"/><path d="M5.400 7.300 q1 -1.300 2 0 M10.600 7.300 q1 -1.300 2 0" fill="none" stroke="#737e93" stroke-width="1.300" stroke-linecap="round"/></svg><div class="abs" style="left:152px;top:333.0px;width:4px;height:4px;border-radius:50%;background:#999"></div><div class="seen" style="left:165.5px;top:328.5px">Seen by <b>Kieran</b> and <b>Marlow</b></div></div><div class="abs" style="left:0;top:303px;width:790px;height:12px;background:#fff"></div><div class="abs" style="left:788.500px;top:516.700px;width:8px;height:163.500px;border-radius:4px;background:#c9c9c9"></div><div class="abs" style="left:15px;top:692px;width:764px;height:99.500px;border:1px solid #ddd;border-radius:5px;background:#f7f7f7;box-shadow:0 1px 2px rgba(0,0,0,.04);overflow:hidden"><div class="abs" style="left:0;top:0;width:764px;height:48.500px;background:#fff;border-bottom:1px solid #ddd"></div><div class="t" style="left:17px;top:15px;font-size:15px;line-height:18px;color:#999;letter-spacing:-0.017em">Discuss this task with the team ...</div><div class="abs" style="left:48.700px;top:49px;width:1px;height:50px;background:#e2e2e2"></div><div class="abs" style="left:178.700px;top:49px;width:1px;height:50px;background:#e2e2e2"></div><div class="abs" style="left:230.700px;top:49px;width:1px;height:50px;background:#e2e2e2"></div><svg class="abs" style="left:16.5px;top:66px" width="16" height="16" viewBox="0 0 16 16"><rect x="0.800" y="0.800" width="14" height="14" rx="1.500" fill="none" stroke="#999" stroke-width="1.400"/><path d="M4.400 8 L6.900 10.600 L11.400 4.800" fill="none" stroke="#6d7c9c" stroke-width="1.300" stroke-linecap="round" stroke-linejoin="round"/></svg><svg class="abs" style="left:66.4px;top:65.4px" width="16" height="16" viewBox="0 0 16 16"><circle cx="8" cy="8" r="7.100" fill="none" stroke="#999" stroke-width="1.200"/><path d="M4.700 9.300 Q8 13 11.300 9.300" fill="none" stroke="#999" stroke-width="1.200" stroke-linecap="round"/><path d="M4.800 6.600 q1 -1.300 2 0 M9.200 6.600 q1 -1.300 2 0" fill="none" stroke="#999" stroke-width="1.200" stroke-linecap="round"/></svg><div class="t" style="left:92.5px;top:62px;font-size:17.500px;line-height:20px;font-weight:bold;color:#999;letter-spacing:0;margin-top:1.500px;margin-left:-0.500px;-webkit-text-stroke:0.600px #999">@</div><svg class="abs" style="left:120px;top:66px" width="15" height="15" viewBox="0 0 15 15"><path d="M5.400 0.500 L3.400 14.500 M11.400 0.500 L9.400 14.500 M1.400 4.800 H14.400 M0.600 10.200 H13.600" fill="none" stroke="#999" stroke-width="2"/></svg><svg class="abs" style="left:147.5px;top:65.5px" width="15" height="16" viewBox="0 0 12 13"><path d="M10.600 5.200 L5.200 10.900 A2.300 2.300 0 0 1 1.800 7.700 L7.600 1.700 A1.600 1.600 0 0 1 9.900 3.900 L4.500 9.500 A0.700 0.700 0 0 1 3.400 8.500 L8.300 3.400" fill="none" stroke="#999" stroke-width="1.100" stroke-linecap="round" stroke-linejoin="round"/></svg><div class="t" style="left:197.5px;top:64px;font-size:13px;line-height:15px;font-weight:bold;color:#999;letter-spacing:0">Aa</div><div class="abs" style="left:197.5px;top:79.3px;width:16.500px;height:1.500px;background:#999"></div><div class="abs" style="left:583.5px;top:56.3px;width:80px;height:34.500px;border:1px solid #ccc;border-radius:4px;background:#fff;color:#333;font-size:14px;line-height:32.500px;text-align:center;letter-spacing:-0.020em">Cancel</div><div class="abs" style="left:674.7px;top:56.3px;width:78.500px;height:34.500px;border-radius:4px;background:#9a9a9a;color:#fff;font-size:14px;line-height:34.500px;text-align:center;letter-spacing:-0.020em;box-shadow:0 1px 3px rgba(0,0,0,.25)">Post</div></div></div>
<!--DETAIL-E-->
<!--CHAT-S-->
<div id="chat"><div class="abs" style="left:-1px;top:0;width:1px;height:97px;background:#e6e6e6"></div><div class="abs" style="left:0;top:53px;width:70px;height:1px;background:#e4e4e4"></div><div class="abs" style="left:0;top:96.500px;width:70px;height:1px;background:#e4e4e4"></div><svg class="abs" style="left:17.300px;top:8.800px" width="35.500" height="35.500" viewBox="0 0 30 30"><use href="#marlow"/></svg><div class="abs" style="left:37px;top:7.800px;width:18.800px;height:18.800px;border-radius:50%;background:#e2765f;color:#fff;font-size:11px;font-weight:bold;-webkit-text-stroke:0;line-height:18.800px;text-align:center;letter-spacing:0">3</div><div class="abs" style="left:42.700px;top:33.200px;width:11.400px;height:11.400px;border-radius:50%;background:#3f9c88;box-shadow:0 0 0 1.500px #fff"></div><svg class="abs" style="left:26px;top:59.500px" width="19" height="15" viewBox="0 0 19 15"><path d="M7 0.300 C10.800 0.300 13.600 2.300 13.600 4.900 C13.600 7.500 10.800 9.500 7 9.500 C6.200 9.500 5.500 9.400 4.800 9.200 C3.800 10 2.500 10.500 1 10.500 C1.800 9.800 2.300 9 2.400 8.200 C1.200 7.400 0.400 6.200 0.400 4.900 C0.400 2.300 3.200 0.300 7 0.300 Z" fill="#2596b5"/><path d="M14.800 5.400 C17 6 18.600 7.500 18.600 9.300 C18.600 10.500 17.900 11.600 16.800 12.300 C16.900 13 17.300 13.800 18 14.400 C16.700 14.400 15.500 14 14.600 13.300 C14 13.500 13.300 13.600 12.600 13.600 C10.400 13.600 8.600 12.800 7.600 11.500 C11.600 11.300 14.700 8.900 14.800 5.400 Z" fill="#2596b5"/></svg><div class="t" style="left:18px;top:77.700px;font-size:16px;line-height:18px;font-weight:bold;color:#333;letter-spacing:-0.020em">Chat</div><svg class="abs" style="left:17.0px;top:108.7px" width="36" height="36" viewBox="0 0 36 36"><clipPath id="cp126"><circle cx="18" cy="18" r="18"/></clipPath><g clip-path="url(#cp126)"><rect width="36" height="36" fill="#ecebeb"/><g transform="translate(18 17.7) scale(1.3) translate(-18 -18)"><path d="M2 37 C3 26 10 24.800 18 24.800 C26 24.800 33 26 34 37 Z" fill="#f6f6f6"/><path d="M14.800 20 h6.400 v5.200 q-3.200 2.500 -6.400 0 z" fill="#e0b9a0"/><ellipse cx="18" cy="16" rx="6" ry="7.600" fill="#e0b9a0"/><path d="M12 16 C12 24 15 25.200 18 25.200 C21 25.200 24 24 24 16 C23.500 19.500 21 20 18 20 C15 20 12.500 19.500 12 16 Z" fill="#5f3f2e" opacity="0.600"/><path d="M11.500 15.500 C9.800 4.800 26.200 4.800 24.500 15.500 C24.200 12.800 23 11.600 20.800 11.700 C17.500 11.900 14.500 11.800 12.800 12.800 C12 13.500 11.700 14.400 11.500 15.500 Z" fill="#5f3f2e"/><path d="M15.600 19.300 Q18 21.500 20.400 19.300 Q18 20.100 15.600 19.300Z" fill="#fff" stroke="#fff" stroke-width="0.400"/></g></g></svg><div class="abs" style="left:42.500px;top:133px;width:11.500px;height:11.500px;border-radius:50%;background:#fdb913;box-shadow:0 0 0 1.200px #fff"></div><svg class="abs" style="left:17.0px;top:162.0px" width="36" height="36" viewBox="0 0 36 36"><clipPath id="cp180"><circle cx="18" cy="18" r="18"/></clipPath><g clip-path="url(#cp180)"><rect width="36" height="36" fill="#ebeaea"/><g transform="translate(18 17.7) scale(1.3) translate(-18 -18)"><path d="M9.500 17 C9 6.500 27 6.500 26.500 17 L28.500 33 H7.500 Z" fill="#7a4a32"/><path d="M2 37 C3 26 10 24.800 18 24.800 C26 24.800 33 26 34 37 Z" fill="#f1f0ef"/><path d="M14.800 20 h6.400 v5.200 q-3.200 2.500 -6.400 0 z" fill="#dba686"/><ellipse cx="18" cy="16" rx="6" ry="7.600" fill="#dba686"/><path d="M11.600 17 C10 6.500 26 6.500 24.400 17 C23.500 12.500 20 11 15 12.500 C13.500 13.500 12.200 14.500 11.600 17 Z" fill="#7a4a32"/><path d="M15.600 19.300 Q18 21.500 20.400 19.300 Q18 20.100 15.600 19.300Z" fill="#fff" stroke="#fff" stroke-width="0.400"/></g></g></svg><svg class="abs" style="left:17.0px;top:215.3px" width="36" height="36" viewBox="0 0 36 36"><clipPath id="cp233"><circle cx="18" cy="18" r="18"/></clipPath><g clip-path="url(#cp233)"><rect width="36" height="36" fill="#5b863c"/><circle cx="6" cy="8" r="7" fill="#6fa043"/><circle cx="30" cy="10" r="8" fill="#3f6f2c"/><g transform="translate(18 17.7) scale(1.3) translate(-18 -18)"><ellipse cx="18" cy="14.500" rx="10.500" ry="10" fill="#191412"/><path d="M2 37 C3 26 10 24.800 18 24.800 C26 24.800 33 26 34 37 Z" fill="#7a3f78"/><path d="M14.800 20 h6.400 v5.200 q-3.200 2.500 -6.400 0 z" fill="#b98363"/><ellipse cx="18" cy="16" rx="6" ry="7.600" fill="#b98363"/><path d="M11.600 15 C10.500 5.500 25.500 5.500 24.400 15 C23.500 11.500 21 10.800 18 10.800 C15 10.800 12.500 11.500 11.600 15 Z" fill="#191412"/><path d="M15.600 19.300 Q18 21.500 20.400 19.300 Q18 20.100 15.600 19.300Z" fill="#fff" stroke="#fff" stroke-width="0.400"/></g></g></svg><svg class="abs" style="left:17.0px;top:268.7px" width="36" height="36" viewBox="0 0 36 36"><clipPath id="cp286"><circle cx="18" cy="18" r="18"/></clipPath><g clip-path="url(#cp286)"><rect width="36" height="36" fill="#8a6a5c"/><rect x="19" y="0" width="17" height="36" fill="#a5533c"/><rect x="0" y="0" width="19" height="36" fill="#6e5a52"/><g transform="translate(18 17.7) scale(1.3) translate(-18 -18)"><path d="M2 37 C3 26 10 24.800 18 24.800 C26 24.800 33 26 34 37 Z" fill="#8d9196"/><path d="M14.800 20 h6.400 v5.200 q-3.200 2.500 -6.400 0 z" fill="#d6a588"/><ellipse cx="18" cy="16" rx="6" ry="7.600" fill="#d6a588"/><path d="M12 17 C12 24.500 15 25.500 18 25.500 C21 25.500 24 24.500 24 17 C23.500 20 21 20.500 18 20.500 C15 20.500 12.500 20 12 17 Z" fill="#7a5a48" opacity="0.850"/><path d="M15.600 19.300 Q18 21.500 20.400 19.300 Q18 20.100 15.600 19.300Z" fill="#fff" stroke="#fff" stroke-width="0.400"/></g></g></svg><svg class="abs" style="left:17.0px;top:322.0px" width="36" height="36" viewBox="0 0 36 36"><clipPath id="cp340"><circle cx="18" cy="18" r="16"/></clipPath><circle cx="18" cy="18" r="17.900" fill="#b05cc0"/><g clip-path="url(#cp340)"><rect width="36" height="36" fill="#4f7a3a"/><circle cx="6" cy="8" r="7" fill="#6fa043"/><circle cx="30" cy="10" r="8" fill="#3f6f2c"/><g transform="translate(18 17.7) scale(1.3) translate(-18 -18)"><path d="M2 37 C3 26 10 24.800 18 24.800 C26 24.800 33 26 34 37 Z" fill="#a9c4dc"/><path d="M14.800 20 h6.400 v5.200 q-3.200 2.500 -6.400 0 z" fill="#d8a685"/><ellipse cx="18" cy="16" rx="6" ry="7.600" fill="#d8a685"/><path d="M11.600 15 C10.500 5.500 25.500 5.500 24.400 15 C23.500 11.500 21 10.800 18 10.800 C15 10.800 12.500 11.500 11.600 15 Z" fill="#2a1f1a"/><path d="M15.600 19.300 Q18 21.500 20.400 19.300 Q18 20.100 15.600 19.300Z" fill="#fff" stroke="#fff" stroke-width="0.400"/></g></g></svg><svg class="abs" style="left:17.0px;top:375.3px" width="36" height="36" viewBox="0 0 36 36"><clipPath id="cp393"><circle cx="18" cy="18" r="16"/></clipPath><circle cx="18" cy="18" r="17.900" fill="#b05cc0"/><g clip-path="url(#cp393)"><rect width="36" height="36" fill="#b9b4b0"/><g transform="translate(18 17.7) scale(1.3) translate(-18 -18)"><path d="M9.500 17 C9 6.500 27 6.500 26.500 17 L28.500 33 H7.500 Z" fill="#7a5540"/><path d="M2 37 C3 26 10 24.800 18 24.800 C26 24.800 33 26 34 37 Z" fill="#55555c"/><path d="M14.800 20 h6.400 v5.200 q-3.200 2.500 -6.400 0 z" fill="#e0b49a"/><ellipse cx="18" cy="16" rx="6" ry="7.600" fill="#e0b49a"/><path d="M11.600 17 C10 6.500 26 6.500 24.400 17 C23.500 12.500 20 11 15 12.500 C13.500 13.500 12.200 14.500 11.600 17 Z" fill="#7a5540"/><path d="M15.600 19.300 Q18 21.500 20.400 19.300 Q18 20.100 15.600 19.300Z" fill="#fff" stroke="#fff" stroke-width="0.400"/></g></g></svg><svg class="abs" style="left:17.0px;top:428.7px" width="36" height="36" viewBox="0 0 36 36"><clipPath id="cp446"><circle cx="18" cy="18" r="18"/></clipPath><g clip-path="url(#cp446)"><rect width="36" height="36" fill="#274a2c"/><circle cx="30" cy="10" r="9" fill="#3c6a35"/><g transform="translate(18 17.7) scale(1.3) translate(-18 -18)"><path d="M2 37 C3 26 10 24.800 18 24.800 C26 24.800 33 26 34 37 Z" fill="#1f6fd2"/><path d="M14.800 20 h6.400 v5.200 q-3.200 2.500 -6.400 0 z" fill="#c99879"/><ellipse cx="18" cy="16" rx="6" ry="7.600" fill="#c99879"/><path d="M11.600 15 C10.500 5.500 25.500 5.500 24.400 15 C23.500 11.500 21 10.800 18 10.800 C15 10.800 12.500 11.500 11.600 15 Z" fill="#2a211c"/><path d="M15.600 19.300 Q18 21.500 20.400 19.300 Q18 20.100 15.600 19.300Z" fill="#fff" stroke="#fff" stroke-width="0.400"/></g></g></svg><div class="abs" style="left:17px;top:482.0px;width:36px;height:36px;border-radius:50%;background:#2596b5;color:#fff;font-size:15px;font-weight:bold;line-height:36px;text-align:center;letter-spacing:0">KC</div><svg class="abs" style="left:17.0px;top:535.3px" width="36" height="36" viewBox="0 0 36 36"><clipPath id="cp553"><circle cx="18" cy="18" r="18"/></clipPath><g clip-path="url(#cp553)"><rect width="36" height="36" fill="#3a3532"/><g transform="translate(18 17.7) scale(1.3) translate(-18 -18)"><path d="M2 37 C3 26 10 24.800 18 24.800 C26 24.800 33 26 34 37 Z" fill="#2a2624"/><path d="M14.800 20 h6.400 v5.200 q-3.200 2.500 -6.400 0 z" fill="#c08e6e"/><ellipse cx="18" cy="16" rx="6" ry="7.600" fill="#c08e6e"/><path d="M10.500 13.500 C10 4.500 26 4.500 25.500 13.500 C22 12 14 12 10.500 13.500 Z" fill="#141210"/><path d="M15.600 19.300 Q18 21.500 20.400 19.300 Q18 20.100 15.600 19.300Z" fill="#fff" stroke="#fff" stroke-width="0.400"/></g></g></svg><div class="abs" style="left:17px;top:588.7px;width:36px;height:36px;border-radius:50%;background:#2596b5;color:#fff;font-size:14px;font-weight:bold;line-height:36px;text-align:center;letter-spacing:0">MM</div><svg class="abs" style="left:17.0px;top:642.0px" width="36" height="36" viewBox="0 0 36 36"><clipPath id="cp660"><circle cx="18" cy="18" r="18"/></clipPath><g clip-path="url(#cp660)"><rect width="36" height="36" fill="#e6e4e1"/><path d="M0 6h36M0 12h36M0 18h36M0 24h36" stroke="#d5d3d0" stroke-width="0.800"/><g transform="translate(18 19.5) scale(1.15) translate(-18 -18)"><path d="M9.500 17 C9 6.500 27 6.500 26.500 17 L28.500 33 H7.500 Z" fill="#1a1614"/><path d="M2 37 C3 26 10 24.800 18 24.800 C26 24.800 33 26 34 37 Z" fill="#232a3c"/><path d="M14.800 20 h6.400 v5.200 q-3.200 2.500 -6.400 0 z" fill="#6e4a38"/><ellipse cx="18" cy="16" rx="6" ry="7.600" fill="#6e4a38"/><path d="M11.600 17 C10 6.500 26 6.500 24.400 17 C23.500 12.500 20 11 15 12.500 C13.500 13.500 12.200 14.500 11.600 17 Z" fill="#1a1614"/><path d="M15.600 19.300 Q18 21.500 20.400 19.300 Q18 20.100 15.600 19.300Z" fill="#fff" stroke="#fff" stroke-width="0.400"/></g></g></svg><svg class="abs" style="left:17.0px;top:695.3px" width="36" height="36" viewBox="0 0 36 36"><clipPath id="cp713"><circle cx="18" cy="18" r="16"/></clipPath><circle cx="18" cy="18" r="17.900" fill="#f3e20c"/><g clip-path="url(#cp713)"><rect width="36" height="36" fill="#a9b3c4"/><g transform="translate(18 17.7) scale(1.3) translate(-18 -18)"><path d="M9.500 17 C9 6.500 27 6.500 26.500 17 L28.500 33 H7.500 Z" fill="#2a1c18"/><path d="M2 37 C3 26 10 24.800 18 24.800 C26 24.800 33 26 34 37 Z" fill="#c9c4c0"/><path d="M14.800 20 h6.400 v5.200 q-3.200 2.500 -6.400 0 z" fill="#dba98c"/><ellipse cx="18" cy="16" rx="6" ry="7.600" fill="#dba98c"/><path d="M11.600 17 C10 6.500 26 6.500 24.400 17 C23.500 12.500 20 11 15 12.500 C13.500 13.500 12.200 14.500 11.600 17 Z" fill="#2a1c18"/><path d="M15.600 19.300 Q18 21.500 20.400 19.300 Q18 20.100 15.600 19.300Z" fill="#fff" stroke="#fff" stroke-width="0.400"/></g></g></svg><svg class="abs" style="left:17.0px;top:748.7px" width="36" height="36" viewBox="0 0 36 36"><clipPath id="cp766"><circle cx="18" cy="18" r="18"/></clipPath><g clip-path="url(#cp766)"><rect width="36" height="36" fill="#9c9488"/><g transform="translate(18 19.5) scale(1.15) translate(-18 -18)"><path d="M9.500 17 C9 6.500 27 6.500 26.500 17 L28.500 33 H7.500 Z" fill="#2a1d19"/><path d="M2 37 C3 26 10 24.800 18 24.800 C26 24.800 33 26 34 37 Z" fill="#1c2c55"/><path d="M14.800 20 h6.400 v5.200 q-3.200 2.500 -6.400 0 z" fill="#cf9f82"/><ellipse cx="18" cy="16" rx="6" ry="7.600" fill="#cf9f82"/><path d="M11.600 17 C10 6.500 26 6.500 24.400 17 C23.500 12.500 20 11 15 12.500 C13.500 13.500 12.200 14.500 11.600 17 Z" fill="#2a1d19"/><path d="M15.600 19.300 Q18 21.500 20.400 19.300 Q18 20.100 15.600 19.300Z" fill="#fff" stroke="#fff" stroke-width="0.400"/></g></g></svg><svg class="abs" style="left:17.0px;top:802.0px" width="36" height="36" viewBox="0 0 36 36"><clipPath id="cp820"><circle cx="18" cy="18" r="16"/></clipPath><circle cx="18" cy="18" r="17.900" fill="#b05cc0"/><g clip-path="url(#cp820)"><rect width="36" height="36" fill="#d9d3c8"/><g transform="translate(18 17.7) scale(1.3) translate(-18 -18)"><path d="M9.500 17 C9 6.500 27 6.500 26.500 17 L28.500 33 H7.500 Z" fill="#c9a36a"/><path d="M2 37 C3 26 10 24.800 18 24.800 C26 24.800 33 26 34 37 Z" fill="#8a8f86"/><path d="M14.800 20 h6.400 v5.200 q-3.200 2.500 -6.400 0 z" fill="#e6b99c"/><ellipse cx="18" cy="16" rx="6" ry="7.600" fill="#e6b99c"/><path d="M11.600 17 C10 6.500 26 6.500 24.400 17 C23.500 12.500 20 11 15 12.500 C13.500 13.500 12.200 14.500 11.600 17 Z" fill="#c9a36a"/><path d="M15.600 19.300 Q18 21.500 20.400 19.300 Q18 20.100 15.600 19.300Z" fill="#fff" stroke="#fff" stroke-width="0.400"/></g></g></svg></div>
<!--CHAT-E-->
<!--OVERLAY-S-->
<div id="ov"><div class="abs" style="left:208px;top:0;width:1px;height:54px;background:#84a0aa"></div><div class="abs" style="left:208px;top:54px;width:1px;height:39px;background:#84a0aa"></div><div class="abs" style="left:208px;top:93px;width:1px;height:4px;background:#1a6c86"></div><div class="abs" style="left:208px;top:97px;width:1px;height:805px;background:#7b96a0"></div><div class="abs" style="left:322px;top:109.500px;width:125px;height:35px;border-radius:5px;background:#e8f4f7"></div><svg class="abs" style="left:331.400px;top:118px" width="18" height="18" viewBox="0 0 18 18"><path d="M0.600 0.400 H17.400 Q18.300 0.500 17.700 1.400 L11.200 8.800 V16.600 Q11.100 17.700 10.100 17.100 L7.200 14.900 Q6.800 14.600 6.800 14 V8.800 L0.300 1.400 Q-0.300 0.500 0.600 0.400 Z" fill="#2b98b7"/></svg><div class="t" style="left:356.400px;top:118.500px;font-size:13.500px;line-height:17px;color:#333">My Open</div><svg class="abs" style="left:421px;top:120.300px" width="15" height="14" viewBox="0 0 15 14"><path d="M0.800 0.600 L14 13.400 M14 0.600 L0.800 13.400" stroke="#333" stroke-width="1.500" stroke-linecap="round"/></svg><div class="abs" style="left:455.500px;top:109.500px;width:119px;height:35px;border-radius:5px;background:#fff"></div><svg class="abs" style="left:466px;top:119.500px" width="18" height="16" viewBox="0 0 18 16"><path d="M3.300 0.800 V14.600 M0.600 11.900 L3.300 14.900 L6 11.900" fill="none" stroke="#2b98b7" stroke-width="1.300" stroke-linecap="round" stroke-linejoin="round"/><path d="M8.600 1.400 H17.600 M8.600 5.600 H15.600 M8.600 9.800 H13.400 M8.600 14 H11.400" stroke="#2b98b7" stroke-width="1.500" stroke-linecap="round"/></svg><div class="t" style="left:491.500px;top:118.500px;font-size:13.500px;line-height:17px;color:#333;letter-spacing:-0.005em">Sort: Project</div><div class="abs" style="left:583.400px;top:123.200px;width:15.500px;height:8.600px;border-radius:4.300px;background:#cfcfcf"></div><div class="abs" style="left:584.200px;top:124px;width:7px;height:7px;border-radius:50%;background:#fff"></div><div class="t" style="left:603.700px;top:119.500px;font-size:13.500px;line-height:17px;color:#333;letter-spacing:-0.008em">Show Subtasks</div><div class="abs" style="left:323px;top:152.500px;width:569.700px;height:151px;border-radius:6px;background:#fff;box-shadow:0 5px 18px rgba(0,0,0,.34),0 0 4px rgba(0,0,0,.18)"></div><div class="t" style="left:341.500px;top:169.700px;font-size:15.600px;line-height:18px;color:#333;letter-spacing:-0.008em">Filters</div><div class="t" style="left:727.500px;top:170px;font-size:12.200px;line-height:15px;color:#333;letter-spacing:0">Showing 14 out of 67 tasks</div><div class="abs" style="left:727.500px;top:187px;width:147px;height:1px;background:#ddd"></div><div class="abs" style="left:341px;top:203.500px;width:98.5px;height:30.500px;border-radius:16px;border:1.500px solid #2b98b7;background:#e9f4f8"></div><div class="abs" style="left:346px;top:207.800px;width:22px;height:22px;border-radius:50%;background:#2b98b7;color:#fff;font-size:12.500px;line-height:22px;text-align:center;letter-spacing:0">14</div><div class="t" style="left:374.5px;top:211.600px;font-size:12.700px;line-height:16px;color:#2b98b7;letter-spacing:-0.020em">My Open</div><div class="abs" style="left:448.5px;top:203.500px;width:95px;height:30.500px;border-radius:16px;border:1px solid #e3e3e3;background:#fff"></div><div class="abs" style="left:453.5px;top:207.800px;width:22px;height:22px;border-radius:50%;background:#e6e6e6;color:#444;font-size:12.500px;line-height:22px;text-align:center;letter-spacing:0">61</div><div class="t" style="left:482.0px;top:211.600px;font-size:12.700px;line-height:16px;color:#333;letter-spacing:-0.020em">All Open</div><div class="abs" style="left:553px;top:203.500px;width:115px;height:30.500px;border-radius:16px;border:1px solid #e3e3e3;background:#fff"></div><div class="abs" style="left:558px;top:207.800px;width:22px;height:22px;border-radius:50%;background:#e6e6e6;color:#444;font-size:12.500px;line-height:22px;text-align:center;letter-spacing:0">2</div><div class="t" style="left:586.5px;top:211.600px;font-size:12.700px;line-height:16px;color:#333;letter-spacing:-0.020em">My Overdue</div><div class="abs" style="left:677.5px;top:203.500px;width:124.5px;height:30.500px;border-radius:16px;border:1px solid #e3e3e3;background:#fff"></div><div class="abs" style="left:682.5px;top:207.800px;width:22px;height:22px;border-radius:50%;background:#e6e6e6;color:#444;font-size:12.500px;line-height:22px;text-align:center;letter-spacing:0">5</div><div class="t" style="left:711.0px;top:211.600px;font-size:12.700px;line-height:16px;color:#333;letter-spacing:-0.020em">All Completed</div><div class="abs" style="left:341.500px;top:249px;width:249.500px;height:1px;background:#e2e2e2"></div><div class="abs" style="left:624.500px;top:249px;width:250px;height:1px;background:#e2e2e2"></div><svg class="abs" style="left:602px;top:246px" width="12" height="8" viewBox="0 0 12 8"><path d="M1 1.200 L6 6.200 L11 1.200" fill="none" stroke="#5b6b8c" stroke-width="1.600" stroke-linecap="round" stroke-linejoin="round"/></svg><svg class="abs" style="left:342.500px;top:271px" width="15" height="15" viewBox="0 0 17 17"><circle cx="8.500" cy="8.500" r="8.500" fill="#2596b5"/><path d="M8.500 4.600 V12.400 M4.600 8.500 H12.400" stroke="#fff" stroke-width="2.600" stroke-linecap="round"/></svg><div class="t" style="left:363.500px;top:269.500px;font-size:15px;line-height:18px;color:#999">Add Filter</div><div class="abs" style="left:311px;top:95px;width:587px;height:212px;border:6px solid #fdc500;pointer-events:none"></div></div>
<!--OVERLAY-E-->
</body>
</html>
